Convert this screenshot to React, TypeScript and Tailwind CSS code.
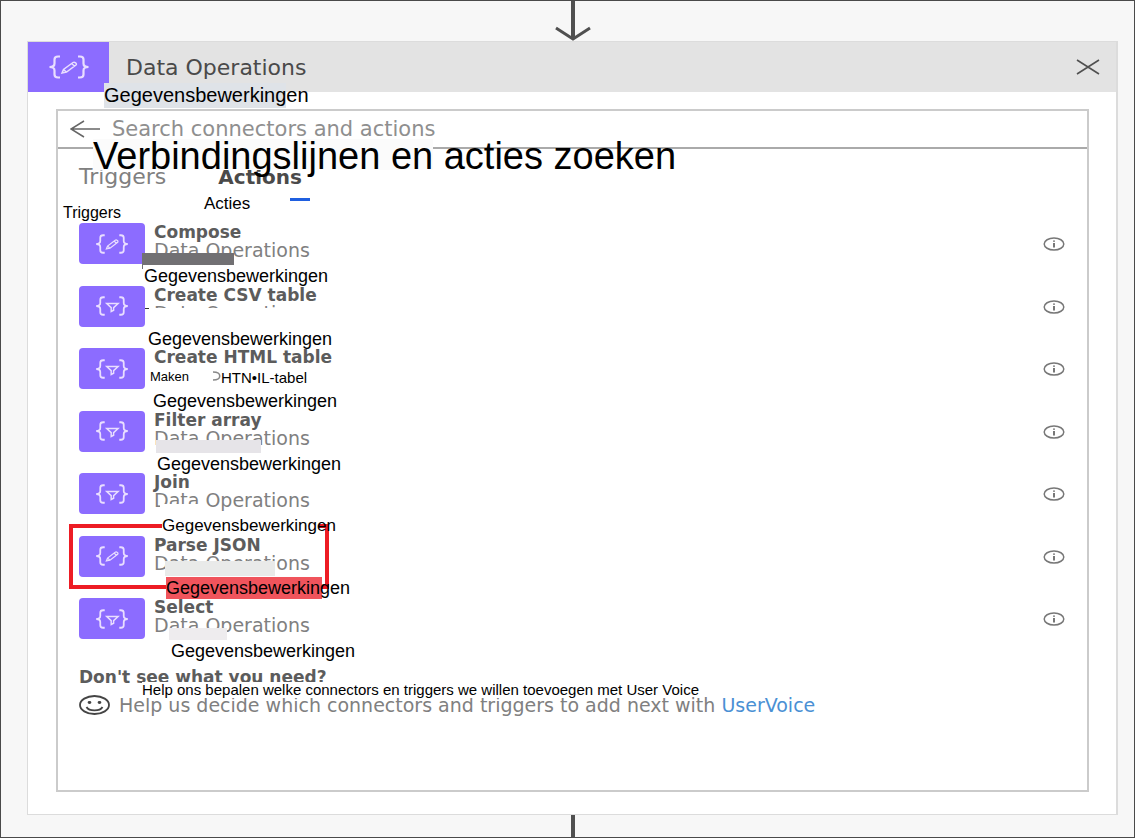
import React from "react";

type Glyph = "pencil" | "funnel";

const wide = "font-['DejaVu_Sans',Verdana,sans-serif]";
const arial = "font-['Liberation_Sans',Arial,sans-serif]";

function BracesIcon({ glyph, className }: { glyph: Glyph; className: string }) {
  return (
    <svg viewBox="0 0 42 24" className={className} fill="none" stroke="#e9defF" strokeWidth="2.200" preserveAspectRatio="none" aria-hidden="true">
      <path d="M12 1.5H10C7.5 1.5 6.5 2.6 6.5 4.5V8.5C6.5 10.6 5 12 1.5 12C5 12 6.5 13.4 6.5 15.5V19.5C6.5 21.4 7.5 22.5 10 22.5H12" />
      <path d="M30 1.5H32C34.5 1.5 35.5 2.6 35.5 4.5V8.5C35.5 10.6 37 12 40.5 12C37 12 35.5 13.4 35.5 15.5V19.5C35.5 21.4 34.5 22.5 32 22.5H30" />
      {glyph === "pencil" ? (
        <path strokeWidth="1.500" d="M14 18L15.5 14.500L25 7.500C26.500 6.500 29.500 8.500 28 10L18.500 17L14 18ZM15.500 14.500L18.500 17M23.500 8.500L26.500 11" />
      ) : (
        <path strokeWidth="1.800" d="M14.500 9H28.500L23 14V17L20 18.500V14L14.500 9Z" />
      )}
    </svg>
  );
}

function InfoIcon() {
  return (
    <svg viewBox="0 0 22 14" className="h-[14px] w-[22px]" fill="none" stroke="#777" strokeWidth="1.500" aria-hidden="true">
      <ellipse cx="11" cy="7" rx="9.800" ry="6" />
      <path strokeWidth="2" d="M11 3.500V4.800M11 6V10.500" />
    </svg>
  );
}

type Action = {
  title: string;
  subtitle?: string;
  glyph: Glyph;
  note: string;
  noteClass: string;
  patches: string[];
  extra?: React.ReactNode;
};

const actions: Action[] = [
  {
    title: "Compose",
    subtitle: "Data Operations",
    glyph: "pencil",
    note: "Gegevensbewerkingen",
    noteClass: "left-[86px] top-[42px] text-lg",
    patches: ["left-[84px] top-[30px] h-3 w-[92px] bg-[#717073]", "left-[84px] top-[42px] h-1 w-px bg-[#717073]"],
  },
  {
    title: "Create CSV table",
    subtitle: "Data Operations",
    glyph: "funnel",
    note: "Gegevensbewerkingen",
    noteClass: "left-[90px] top-[42px] text-lg",
    patches: ["left-[90px] top-[22px] h-[19px] w-[172px] bg-white", "left-[87px] top-[22px] h-px w-1 bg-[#333]"],
  },
  {
    title: "Create HTML table",
    glyph: "funnel",
    note: "Gegevensbewerkingen",
    noteClass: "left-[95px] top-[42px] text-lg",
    patches: [],
    extra: (
      <>
        <span className="absolute left-[92px] top-[20px] text-[13px] leading-[18px] text-black">Maken</span>
        <svg viewBox="0 0 8 10" className="absolute left-[155px] top-[23px] h-[10px] w-2" fill="none" stroke="#888" strokeWidth="1.500" aria-hidden="true">
          <path d="M0 1C9 1 9 9 0 9" />
        </svg>
        <span className="absolute left-[163px] top-[21px] text-[15px] leading-[18px] text-black">HTN•IL-tabel</span>
      </>
    ),
  },
  {
    title: "Filter array",
    subtitle: "Data Operations",
    glyph: "funnel",
    note: "Gegevensbewerkingen",
    noteClass: "left-[99px] top-[42px] text-lg",
    patches: ["left-[98px] top-[29px] h-[13px] w-[105px] bg-[#e6e4e8]"],
  },
  {
    title: "Join",
    subtitle: "Data Operations",
    glyph: "funnel",
    note: "Gegevensbewerkingen",
    noteClass: "left-[104px] top-[42px] z-20 text-[17px]",
    patches: ["left-[102px] top-[31px] h-[9px] w-10 bg-white", "left-[104px] top-[43px] z-20 h-5 w-[157px] bg-white"],
  },
  {
    title: "Parse JSON",
    subtitle: "Data Operations",
    glyph: "pencil",
    note: "Gegevensbewerkingen",
    noteClass: "left-[108px] top-[41px] z-20 text-lg",
    patches: ["left-[107px] top-[25px] h-[15px] w-[110px] bg-[#e9eae9]", "left-[108px] top-[41px] z-20 h-[22px] w-[156px] bg-[#f0545c]"],
    extra: <span className="absolute -top-3 left-[11px] z-10 h-[65px] w-[260px] border-4 border-[#ed1c24]" />,
  },
  {
    title: "Select",
    subtitle: "Data Operations",
    glyph: "funnel",
    note: "Gegevensbewerkingen",
    noteClass: "left-[113px] top-[42px] text-lg",
    patches: ["left-[111px] top-[30px] h-3 w-[58px] bg-[#eeecee]"],
  },
];

function ActionRow({ action }: { action: Action }) {
  return (
    <li className={`relative flex items-start justify-between pl-[21px] pr-[22px] ${arial}`}>
      <button type="button" className={`flex items-start gap-[9px] text-left ${wide}`}>
        <span className="flex h-[41px] w-[66px] items-center justify-center rounded-[4px] bg-[#8c6cff]">
          <BracesIcon glyph={action.glyph} className="h-5 w-[34px]" />
        </span>
        <span className="flex flex-col whitespace-nowrap leading-[18px]">
          <span className="text-[17px] font-bold leading-[18px] text-[#5c5c5c]">{action.title}</span>
          {action.subtitle && <span className="text-[19px] leading-[18px] text-[#808080]">{action.subtitle}</span>}
        </span>
      </button>
      <button type="button" aria-label={`About ${action.title}`} className="mt-[14px]">
        <InfoIcon />
      </button>
      {action.patches.map((patch) => (
        <span key={patch} className={`absolute ${patch}`} />
      ))}
      {action.extra}
      <span className={`absolute whitespace-nowrap leading-[22px] text-black ${action.noteClass}`}>{action.note}</span>
    </li>
  );
}

export default function App() {
  return (
    <main className={`flex min-h-screen flex-col border border-[#4a4a4a] bg-[#f7f7f7] pl-[26px] pr-4 ${wide}`}>
      <svg viewBox="0 0 40 40" className="h-10 w-10 shrink-0 self-center" fill="none" stroke="#505050" aria-hidden="true">
        <path strokeWidth="4" d="M20 0V37" />
        <path strokeWidth="3" d="M3 27L20 38L37 27" />
      </svg>

      <section className="flex grow flex-col border border-r-2 border-[#dcdcdc] bg-white">
        <header className="relative flex h-[50px] items-center bg-[#e3e3e3]">
          <span className="flex h-full w-[81px] items-center justify-center bg-[#8c6cff]">
            <BracesIcon glyph="pencil" className="h-6 w-[42px]" />
          </span>
          <h1 className="grow pl-[17px] text-[22px] text-[#4a4a4a]">Data Operations</h1>
          <button type="button" aria-label="Close" className="mr-4">
            <svg viewBox="0 0 24 16" className="h-4 w-6" fill="none" stroke="#505050" strokeWidth="1.600" aria-hidden="true">
              <path d="M1 1L23 15M23 1L1 15" />
            </svg>
          </button>
          <span className="absolute left-[76px] top-[41px] h-[25px] w-[182px] bg-[#dfe3e8]" />
          <span className={`absolute left-[76px] top-[41px] text-xl leading-6 text-black ${arial}`}>Gegevensbewerkingen</span>
        </header>

        <div className="flex grow flex-col pb-[22px] pl-7 pr-[27px] pt-[17px]">
          <div className="grow border-2 border-[#cbcbcb]">
            <div className="relative flex h-[38px] items-center border-b-2 border-[#aaa] pl-3">
              <button type="button" aria-label="Back">
                <svg viewBox="0 0 30 18" className="h-[18px] w-[30px]" fill="none" stroke="#666" strokeWidth="1.500" aria-hidden="true">
                  <path d="M30 9H1M14 1L1 9L14 17" />
                </svg>
              </button>
              <input
                type="text"
                aria-label="Search connectors and actions"
                placeholder="Search connectors and actions"
                className="ml-3 h-[34px] grow bg-transparent text-[21px] outline-none placeholder:text-[#8f8f8f]"
              />
              <span className="absolute left-[35px] top-[28px] z-10 h-[31px] w-[340px] bg-[#fbfbfb]" />
              <span className={`absolute left-[35px] top-[22px] z-10 whitespace-nowrap text-[38px] leading-[46px] text-black ${arial}`}>
                Verbindingslijnen en acties zoeken
              </span>
            </div>

            <div className="relative flex h-[74px] items-start gap-[52px] pl-[21px] pt-4 leading-6">
              <button type="button" className="text-[22px] leading-6 text-[#808080]">Triggers</button>
              <button type="button" className="text-xl font-bold leading-6 text-[#4a4a4a]">Actions</button>
              <span className="absolute left-[232px] top-[49px] h-[3px] w-5 bg-[#1f5fe0]" />
              <span className={`absolute left-[5px] top-[54px] text-base leading-5 text-black ${arial}`}>Triggers</span>
              <span className={`absolute left-[146px] top-[45px] text-[17px] leading-5 text-black ${arial}`}>Acties</span>
            </div>

            <ul className="grid min-h-[438px] auto-rows-fr">
              {actions.map((action) => (
                <ActionRow key={action.title} action={action} />
              ))}
            </ul>

            <footer className="relative pl-[21px] pt-1">
              <p className="text-[17px] font-bold leading-6 text-[#5c5c5c]">Don't see what you need?</p>
              <div className="flex items-center gap-2 pt-1 text-[19px] leading-6 text-[#808080]">
                <svg viewBox="0 0 32 20" className="h-5 w-8 shrink-0" fill="none" stroke="#444" strokeWidth="1.800" aria-hidden="true">
                  <ellipse cx="15.500" cy="10" rx="14.500" ry="9" />
                  <path d="M7.500 12C10 16.500 21 16.500 23.500 12" />
                  <ellipse cx="10.500" cy="7.500" rx="1" ry="0.500" fill="#444" />
                  <ellipse cx="20.500" cy="7.500" rx="1" ry="0.500" fill="#444" />
                </svg>
                <p>
                  Help us decide which connectors and triggers to add next with{" "}
                  <a href="#uservoice" className="text-[#4a90d4]">UserVoice</a>
                </p>
              </div>
              <span className="absolute left-[84px] top-[21px] h-4 w-[545px] bg-white" />
              <span className={`absolute left-[84px] top-5 whitespace-nowrap text-[15px] leading-[18px] text-black ${arial}`}>
                Help ons bepalen welke connectors en triggers we willen toevoegen met User Voice
              </span>
            </footer>
          </div>
        </div>
      </section>

      <svg viewBox="0 0 4 22" className="h-[22px] w-1 shrink-0 self-center" aria-hidden="true">
        <path stroke="#505050" strokeWidth="4" d="M2 0V22" />
      </svg>
    </main>
  );
}
